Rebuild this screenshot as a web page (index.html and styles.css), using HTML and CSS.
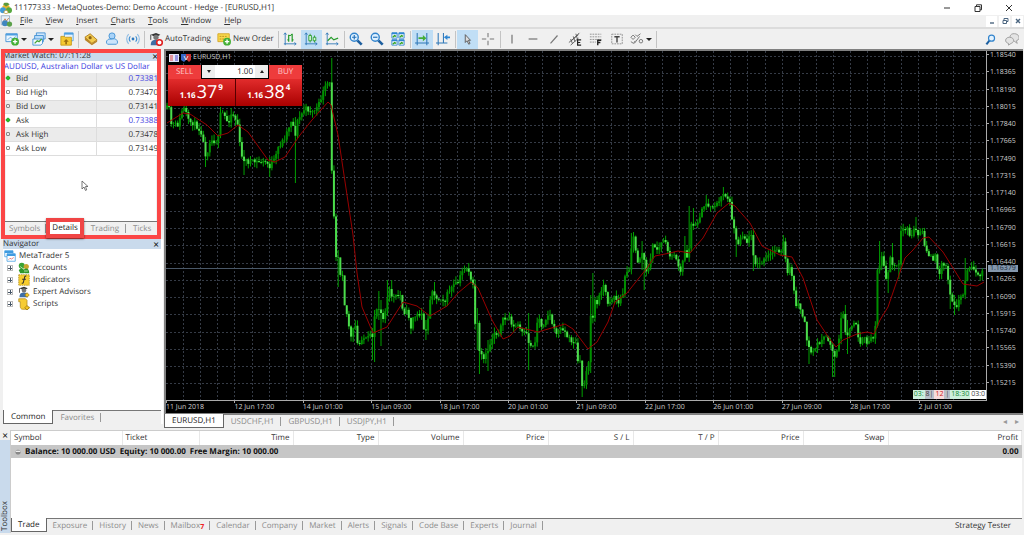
FILE: index.html
```
<!DOCTYPE html>
<html lang="en">
<head>
<meta charset="utf-8">
<title>11177333 - MetaQuotes-Demo: Demo Account - Hedge - [EURUSD,H1]</title>
<link rel="stylesheet" href="styles.css">
</head>
<body>
<svg class="defs" aria-hidden="true">
  <symbol id="trader" viewBox="0 0 16 16"><path d="M2 3l6-2 5 2-5 3z" fill="#333"/><circle cx="8" cy="6" r="3" fill="#777"/><path d="M2 15c0-6 3-6 6-6s5 1 5 6z" fill="#3d6ea5"/><path d="M2 3v6" stroke="#333"/></symbol>
</svg>

<header class="titlebar">
  <svg class="icon" viewBox="0 0 16 16"><path d="M3 6l5-5 5 5-2 5H5z" fill="#e8b62e"/><path d="M4 3l4 3 5-3-3-2H6z" fill="#5b9a3b"/><circle cx="4" cy="11" r="4" fill="#3f9bd8"/><circle cx="12" cy="11" r="4" fill="#57a83f"/><path d="M5 14c1-4 5-4 6 0l-3 2z" fill="#fff" stroke="#b58b20"/></svg>
  <h1>11177333 - MetaQuotes-Demo: Demo Account - Hedge - [EURUSD,H1]</h1>
  <div class="window-buttons">
    <button aria-label="Minimize"><svg viewBox="0 0 8 8"><path d="M1 4h6" stroke="#333"/></svg></button>
    <button aria-label="Restore"><svg viewBox="0 0 8 8"><path d="M1 2.5h5v5H1zM2.5 2.5V.8h5v5H6" fill="none" stroke="#333"/></svg></button>
    <button aria-label="Close"><svg viewBox="0 0 8 8"><path d="M1 1l6 6M7 1L1 7" stroke="#333"/></svg></button>
  </div>
</header>

<nav class="menubar">
  <svg class="icon" viewBox="0 0 16 16"><path d="M1 1h11v12H1z" fill="#e8f0f8" stroke="#8ba6bf"/><path d="M3 10l3-5 2 3 3-4" fill="none" stroke="#c06a2d"/><circle cx="6" cy="11" r="4" fill="#3f86c0"/><circle cx="12" cy="12" r="3.5" fill="#5ba04a"/></svg>
  <button><u>F</u>ile</button><button><u>V</u>iew</button><button><u>I</u>nsert</button><button><u>C</u>harts</button><button><u>T</u>ools</button><button><u>W</u>indow</button><button><u>H</u>elp</button>
  <div class="mdi-buttons">
    <button aria-label="Minimize chart"><svg viewBox="0 0 8 8"><path d="M2 6h4" stroke="#4c6680" stroke-width="1.4"/></svg></button>
    <button aria-label="Restore chart"><svg viewBox="0 0 8 8"><path d="M2 3.500h3.500v3H2zM3 3.500v-2h4v3H5.500" fill="none" stroke="#4c6680"/></svg></button>
    <button aria-label="Close chart"><svg viewBox="0 0 8 8"><path d="M2 2l4 4M6 2L2 6" stroke="#4c6680" stroke-width="1.4"/></svg></button>
  </div>
</nav>

<div class="toolbar">
  <button class="drop" aria-label="New chart"><svg class="icon" viewBox="0 0 16 16"><path d="M1 2h13v9H1z" fill="#eaf5ff" stroke="#3f8fd2"/><path d="M1 2h13v2H1z" fill="#4c9fe0"/><path d="M3 9l3-3 3 2 3-3" fill="none" stroke="#53a5dd"/><circle cx="11.500" cy="11" r="4.500" fill="#45b036"/><path d="M11.500 8.500v5M9 11h5" stroke="#fff" stroke-width="1.600"/></svg><i></i></button>
  <button class="drop" aria-label="Profiles"><svg class="icon" viewBox="0 0 16 16"><path d="M5 1h10v7H5z" fill="#cfe6fb" stroke="#3f8fd2"/><path d="M3 4h10v7H3z" fill="#b9dcfa" stroke="#3f8fd2"/><path d="M1 8h11v5l-2 2H1z" fill="#f3faff" stroke="#3f8fd2"/><path d="M3 13l3-3 2 1 3-3" fill="none" stroke="#45a536" stroke-width="1.500"/></svg><i></i></button>
  <button aria-label="Market Watch"><svg class="icon" viewBox="0 0 16 16"><path d="M5 1h10v9H5z" fill="#e6f3ff" stroke="#4c9fe0"/><path d="M5 1h10v2H5z" fill="#4c9fe0"/><path d="M1 5h4l1 1h7v9H1z" fill="#f5c932" stroke="#c79a18"/><path d="M7 8l3 3H8v3H6v-3H4z" fill="#9c700e"/></svg></button>
  <span class="sep"></span>
  <button aria-label="Data window"><svg class="icon" viewBox="0 0 16 16"><path d="M1 6l6-4 8 7-6 4z" fill="#f3ca4e" stroke="#a8791a"/><path d="M1 6v3l8 6v-2zM9 13l6-4v2l-6 4z" fill="#b9862a"/><circle cx="7" cy="6.500" r="1.800" fill="#8a6417"/></svg></button>
  <button aria-label="Accounts"><svg class="icon" viewBox="0 0 16 16"><circle cx="8" cy="4.500" r="3.500" fill="#a9d3f8" stroke="#3f8fd2"/><path d="M3 14a3 3 0 010-5c2-2 3 0 5-1 2 0 4-1 5 1a3 3 0 010 5z" fill="#cbe4fb" stroke="#3f8fd2"/></svg></button>
  <button aria-label="Signals"><svg class="icon" viewBox="0 0 16 16" fill="none"><circle cx="8" cy="8" r="1.600" fill="#2b78bf"/><path d="M5 5a4.500 4.500 0 000 6M11 5a4.500 4.500 0 010 6" stroke="#3f8fd2" stroke-width="1.300"/><path d="M3 2.500a8 8 0 000 11M13 2.500a8 8 0 010 11" stroke="#8fbce4" stroke-width="1.300"/></svg></button>
  <span class="sep"></span>
  <button class="text"><svg class="icon" viewBox="0 0 16 16"><use href="#trader"/><circle cx="12" cy="12" r="3.200" fill="#fff" stroke="#df2020" stroke-width="1.800"/></svg>AutoTrading</button>
  <button class="text"><svg class="icon" viewBox="0 0 16 16"><path d="M1 2h13v9H1z" fill="#f8d84d" stroke="#d3a624"/><path d="M3 5h9M3 8h6" stroke="#b98c18" stroke-dasharray="2 1"/><circle cx="11.500" cy="11" r="4.500" fill="#45b036"/><path d="M11.500 8.500v5M9 11h5" stroke="#fff" stroke-width="1.600"/></svg>New Order</button>
  <span class="sep"></span>
  <button aria-label="Bar chart"><svg class="icon" viewBox="0 0 16 16" fill="none"><path d="M2.500 1v14M1 13.500h14M1 3l1.500-2L4 3M13 12l2 1.500-2 1.500" stroke="#2f78b8"/><path d="M6.500 3v8M5 9h1.500M6.500 4H9M10.500 2v9M10.500 9H12M9 3h1.500" stroke="#279c2c" stroke-width="1.400"/></svg></button>
  <button class="on" aria-label="Candlesticks"><svg class="icon" viewBox="0 0 16 16" fill="none"><path d="M2.500 1v14M1 13.500h14M1 3l1.500-2L4 3M13 12l2 1.500-2 1.500" stroke="#2f78b8"/><path d="M7 2v10M12 4v8" stroke="#279c2c"/><path d="M5.500 4h3v6h-3zM10.500 6h3v4h-3z" fill="#d7f5d5" stroke="#279c2c"/></svg></button>
  <button aria-label="Line chart"><svg class="icon" viewBox="0 0 16 16" fill="none"><path d="M2.500 1v14M1 13.500h14M1 3l1.500-2L4 3M13 12l2 1.500-2 1.500" stroke="#2f78b8"/><path d="M3 10l4-4 3 3 5-2" stroke="#279c2c" stroke-width="1.400"/></svg></button>
  <span class="sep"></span>
  <button aria-label="Zoom in"><svg class="icon" viewBox="0 0 16 16" fill="none"><path d="M9.500 9.500l5 5" stroke="#1d5f9f" stroke-width="3"/><circle cx="6" cy="6" r="4.600" fill="#dff1ff" stroke="#3384cc" stroke-width="1.600"/><path d="M6 3.500v5M3.500 6h5" stroke="#2370b8" stroke-width="1.300"/></svg></button>
  <button aria-label="Zoom out"><svg class="icon" viewBox="0 0 16 16" fill="none"><path d="M9.500 9.500l5 5" stroke="#1d5f9f" stroke-width="3"/><circle cx="6" cy="6" r="4.600" fill="#dff1ff" stroke="#3384cc" stroke-width="1.600"/><path d="M3.500 6h5" stroke="#2370b8" stroke-width="1.300"/></svg></button>
  <button aria-label="Tile windows"><svg class="icon" viewBox="0 0 16 16"><path d="M1 1h6v6H1zM9 1h6v6H9zM1 9h6v6H1zM9 9h6v6H9z" fill="#fff" stroke="#2f86d2"/><path d="M1 1.500h6M9 1.500h6M1 9.500h6M9 9.500h6" stroke="#2f86d2" stroke-width="2"/><path d="M2 6l2-2 2 1M10 6l2-2 2 1M2 14l2-2 2 1M10 14l2-2 2 1" fill="none" stroke="#35a526" stroke-width="1.400"/></svg></button>
  <span class="sep"></span>
  <button class="on" aria-label="Auto scroll"><svg class="icon" viewBox="0 0 16 16" fill="none"><path d="M2.500 1v14M13.500 1v14M0 12.500h16" stroke="#2f78b8" stroke-width="1.200"/><path d="M4 6h5V3.500L13 7l-4 3.500V8H4z" fill="#43ad36"/></svg></button>
  <button aria-label="Chart shift"><svg class="icon" viewBox="0 0 16 16" fill="none"><path d="M2.500 1v14M8.500 1v11M0 12.500h13" stroke="#2f78b8" stroke-width="1.200"/><path d="M9 6l4-3v2h3v2h-3v2z" fill="#2f86d2"/></svg></button>
  <span class="sep"></span>
  <button class="on" aria-label="Cursor"><svg class="icon" viewBox="0 0 16 16"><path d="M6 3v9l2-2 2 4 1.500-1-2-3.500H12z" fill="#ddd" stroke="#555"/></svg></button>
  <button aria-label="Crosshair"><svg class="icon" viewBox="0 0 16 16"><path d="M8 1v5M8 10v5M1 8h5M10 8h5" stroke="#777" stroke-width="1.200"/></svg></button>
  <span class="sep"></span>
  <button aria-label="Vertical line"><svg class="icon" viewBox="0 0 16 16"><path d="M8 3v10" stroke="#777" stroke-width="1.400"/></svg></button>
  <button aria-label="Horizontal line"><svg class="icon" viewBox="0 0 16 16"><path d="M3 8h10" stroke="#777" stroke-width="1.400"/></svg></button>
  <button aria-label="Trendline"><svg class="icon" viewBox="0 0 16 16"><path d="M4 13l8-9" stroke="#777" stroke-width="1.400"/></svg></button>
  <button aria-label="Equidistant channel"><svg class="icon" viewBox="0 0 16 16"><path d="M1 12L12 3M3 15l9-8M3 8l2 5M6 5l2 6M9 2l2 7M13 1L4 10" stroke="#555" fill="none"/><path d="M15 9h-4v6h4M11 12h3" fill="none" stroke="#222" stroke-width="1.400"/></svg></button>
  <button aria-label="Fibonacci retracement"><svg class="icon" viewBox="0 0 16 16"><path d="M1 2.500h13M1 5.500h13M1 8.500h13M1 11.500h7" stroke="#888" stroke-dasharray="2 1"/><path d="M14 9.500h-4V15M10 12h3" fill="none" stroke="#222" stroke-width="1.600"/></svg></button>
  <button aria-label="Text label"><svg class="icon" viewBox="0 0 16 16"><path d="M2 2.500h12v11H2z" fill="none" stroke="#888" stroke-dasharray="2 1"/><path d="M5 5.500h6M8 5v7" stroke="#444" stroke-width="1.600"/></svg></button>
  <button class="drop" aria-label="Objects"><svg class="icon" viewBox="0 0 16 16" fill="none" stroke="#777" stroke-width="1.100"><path d="M1 6l2.500-2.500L6 6 3.500 8.500zM6 3l2 2 4-3M5 13l6-8M1 11l3 2 2-3"/><circle cx="12.500" cy="10.500" r="2"/></svg><i></i></button>
  <span class="sep"></span>
  <span class="grow"></span>
  <button class="small" aria-label="Search"><svg class="icon" viewBox="0 0 16 16" fill="none"><path d="M7 9l-5 6" stroke="#1d5f9f" stroke-width="3"/><circle cx="9.500" cy="6" r="4.400" fill="#e4f3ff" stroke="#3384cc" stroke-width="1.700"/></svg></button>
  <button aria-label="Chat"><svg class="icon" viewBox="0 0 16 16" fill="#e4e4e4" stroke="#999"><path d="M9 2c8-1 9 7 4 8l1 3-4-3c-5 0-6-7-1-8z"/><path d="M5 6c6 0 6 6 2 7l-3 2v-2C-1 12 0 6 5 6z"/></svg></button>
</div>

<main class="workspace">
  <aside class="sidebar">
    <section class="market-watch">
      <div class="panel-title"><h2>Market Watch: 07:11:28</h2><button aria-label="Close Market Watch">×</button></div>
      <table class="quotes">
        <thead><tr><th colspan="2">AUDUSD, Australian Dollar vs US Dollar</th></tr></thead>
        <tbody>
          <tr class="live"><th><i></i>Bid</th><td>0.73381</td></tr>
          <tr><th><i></i>Bid High</th><td>0.73470</td></tr>
          <tr><th><i></i>Bid Low</th><td>0.73141</td></tr>
          <tr class="live"><th><i></i>Ask</th><td>0.73388</td></tr>
          <tr><th><i></i>Ask High</th><td>0.73478</td></tr>
          <tr><th><i></i>Ask Low</th><td>0.73149</td></tr>
        </tbody>
      </table>
      <div class="tabs"><button>Symbols</button><button class="current marked">Details</button><button>Trading</button><button>Ticks</button></div>
      <svg class="pointer" viewBox="0 0 8 12"><path d="M1 1v8l2-2 1.500 3.500 1.200-.6L4.500 6.500H7z" fill="#fff" stroke="#555" stroke-width=".8"/></svg>
      <div class="highlight"></div>
    </section>
    <section class="navigator">
      <div class="panel-title"><h2>Navigator</h2><button aria-label="Close Navigator">×</button></div>
      <div class="root"><svg class="icon" viewBox="0 0 16 16"><path d="M1 1h11v8H1z" fill="#fff" stroke="#3f9be0"/><path d="M1 1h11v3H1z" fill="#3f9be0"/><path d="M4 5h11v10H4z" fill="#fff" stroke="#3f9be0"/><path d="M4 5h11v3H4z" fill="#3f9be0"/><path d="M6 13l2-2 2 1 3-2" fill="none" stroke="#d66"/></svg>MetaTrader 5</div>
      <ul>
        <li><b></b><svg class="icon" viewBox="0 0 16 16"><circle cx="5" cy="5" r="4" fill="#3aa335"/><circle cx="11" cy="6" r="3.500" fill="#c7a52e"/><path d="M1 11c4-5 7-3 9 2l-2 2H3zM8 10c4-3 7 0 7 5H9z" fill="#2f982b"/><path d="M3 6l5 4M8 12h5" stroke="#d9f3c8"/></svg>Accounts</li>
        <li><b></b><svg class="icon" viewBox="0 0 16 16"><path d="M1 1h14v14H1z" fill="#f8ce2f" stroke="#a98718" stroke-dasharray="2 1"/><path d="M11 3c-3-1-2 3-3 5s0 5-3 4M5.500 7h5" fill="none" stroke="#333" stroke-width="1.400"/></svg>Indicators</li>
        <li><b></b><svg class="icon" viewBox="0 0 16 16"><use href="#trader"/><path d="M12 9l3 3-3 3-3-3z" fill="#f4c521" stroke="#9b7510"/></svg>Expert Advisors</li>
        <li><b></b><svg class="icon" viewBox="0 0 16 16"><path d="M1 1h9l2 2v9h3c0 3-2 3-4 3H6c-2 0-3-2-3-4V5H1z" fill="#f6cc35" stroke="#b08a1c"/><path d="M12 10l3 3-3 3-3-3z" fill="#f4c521" stroke="#9b7510"/></svg>Scripts</li>
      </ul>
      <div class="tabs"><button class="current">Common</button><button>Favorites</button></div>
    </section>
  </aside>

  <section class="chart-area">
    <div class="chart">
      <div class="plot">
        <svg id="plot" viewBox="166 51 820 349" preserveAspectRatio="none"></svg>
        <div class="symbol">
          <svg viewBox="0 0 10 8"><path d="M0 0h10v8H0z" fill="#e5e5f8"/><path d="M1 2h3M1 4h3M1 6h3" stroke="#d44"/><path d="M6 2h3M6 4h3M6 6h3" stroke="#44c"/></svg>
          <svg viewBox="0 0 10 8"><path d="M0 0h5v6L3 8 0 6z" fill="#3668c8"/><path d="M5 0h5v6L8 8 5 5z" fill="#c33"/><path d="M3 2l2 4 2-4" fill="none" stroke="#ddd"/></svg>
          EURUSD,H1
        </div>
        <div class="deal">
          <div class="deal-row">
            <button class="side">SELL</button>
            <div class="volume"><button aria-label="Less"><i class="less"></i></button><input aria-label="Volume" value="1.00"><button aria-label="More"><i class="more"></i></button></div>
            <button class="side">BUY</button>
          </div>
          <div class="deal-row">
            <button class="price">1.16<b>37</b><sup>9</sup></button>
            <button class="price">1.16<b>38</b><sup>4</sup></button>
          </div>
        </div>
        <div class="events"><span class="g">03:</span><span class="d">8|</span><span class="r">12</span><span class="d">|</span><span class="g">18:30</span><span>03:0</span></div>
      </div>
      <div class="prices" id="prices"><output class="last">1.16379</output></div>
      <div class="times" id="times"></div>
    </div>
    <div class="tabs chart-tabs"><button class="current">EURUSD,H1</button><button>USDCHF,H1</button><button>GBPUSD,H1</button><button>USDJPY,H1</button>
      <span class="grow"></span><button class="arrow" aria-label="Previous">◂</button><button class="arrow" aria-label="Next">▸</button></div>
  </section>
</main>

<section class="toolbox">
  <div class="rail"><button aria-label="Close Toolbox">×</button><h2>Toolbox</h2></div>
  <div class="terminal">
    <table class="orders">
      <colgroup><col class="w-symbol"><col class="w-ticket"><col class="w-time"><col class="w-num"><col class="w-num"><col class="w-num"><col class="w-num"><col class="w-num"><col class="w-num"><col class="w-num"><col></colgroup>
      <thead><tr><th>Symbol</th><th>Ticket</th><th>Time</th><th>Type</th><th>Volume</th><th>Price</th><th>S / L</th><th>T / P</th><th>Price</th><th>Swap</th><th>Profit</th></tr></thead>
      <tbody><tr><td colspan="10"><svg viewBox="0 0 8 8"><circle cx="4" cy="4" r="2.500" fill="#aaa"/><path d="M1.500 4a2.500 2.500 0 005 0" fill="#888"/><path d="M2 3.500h4" stroke="#eee"/></svg><span>Balance: 10 000.00 USD</span><span>Equity: 10 000.00</span><span>Free Margin: 10 000.00</span></td><td>0.00</td></tr></tbody>
    </table>
    <div class="tabs"><button class="current">Trade</button><button>Exposure</button><button>History</button><button>News</button><button>Mailbox<sub>7</sub></button><button>Calendar</button><button>Company</button><button>Market</button><button>Alerts</button><button>Signals</button><button>Code Base</button><button>Experts</button><button>Journal</button><span class="grow"></span><button class="tester">Strategy Tester</button></div>
  </div>
</section>
<script src="chart.js"></script>
</body>
</html>
```
FILE: styles.css
```
* { box-sizing: border-box; }
body {
  margin: 0;
  height: 100vh;
  display: flex;
  flex-direction: column;
  overflow: hidden;
  background: #f0f0f0;
  color: #333;
  font: 8px/12px "Open Sans", "Noto Sans", sans-serif;
  text-rendering: geometricPrecision;
}
button, input { font: inherit; color: inherit; border: 0; padding: 0; margin: 0; background: none; text-rendering: inherit; }
h1, h2 { margin: 0; font: inherit; }
.defs { position: absolute; width: 0; height: 0; }
.icon { width: 14px; height: 14px; flex: none; }
.grow { flex: 1; }

.titlebar { display: flex; align-items: center; height: 15px; background: #fff; flex: none; }
.titlebar .icon { width: 12px; height: 12px; margin-right: 2px; }
.window-buttons { margin-left: auto; display: flex; gap: 22px; padding-right: 10px; }
.window-buttons button { display: flex; width: 9px; }
.window-buttons svg { width: 8px; height: 8px; }

.menubar { display: flex; align-items: center; height: 14px; flex: none; border-bottom: 2px solid #dcdcdc; }
.menubar .icon { width: 13px; height: 12px; margin-right: 7px; }
.menubar > button { margin-right: 13px; }
.mdi-buttons { margin-left: auto; display: flex; gap: 2px; padding-right: 1px; }
.mdi-buttons button { display: flex; align-items: center; justify-content: center; width: 11px; height: 11px; background: #fff; }
.mdi-buttons svg { width: 8px; height: 8px; }

.toolbar { display: flex; align-items: center; height: 20px; flex: none; padding: 0 2px; }
.toolbar button { display: flex; align-items: center; justify-content: center; width: 21px; height: 19px; }
.toolbar button.drop { width: 27px; gap: 2px; }
.toolbar button.drop i { border: 3px solid transparent; border-top-color: #222; border-bottom: 0; }
.toolbar button.text { width: auto; gap: 2px; padding: 0 3px; white-space: nowrap; }
.toolbar button.on { background: #c0def5; }
.toolbar .small .icon { width: 11px; height: 11px; }
.sep { width: 1px; height: 17px; background: #c4c4c4; margin: 0 1px; }

.workspace { flex: 1; min-height: 0; display: flex; gap: 1px; }
.sidebar { width: 163px; flex: none; display: flex; flex-direction: column; padding-left: 3px; }
.panel-title { display: flex; align-items: center; justify-content: space-between; height: 10px; flex: none; background: #c9daec; line-height: 10px; }
.panel-title button { width: 10px; color: #000; font-size: 10px; line-height: 8px; }

.tabs { display: flex; height: 14px; flex: none; border-top: 1px solid #777; background: #f0f0f0; color: #8c8c8c; }
.tabs button { display: flex; align-items: center; padding: 0 6px; height: 13px; position: relative; white-space: nowrap; }
.tabs button:not(.current)::after { content: ""; position: absolute; right: 0; top: 2px; height: 9px; border-right: 1px solid #999; }
.tabs .current { background: #fff; color: #222; border: 1px solid #666; border-top: 0; margin-top: -1px; height: 14px; }

.market-watch { position: relative; display: flex; flex-direction: column; height: 190px; padding: 2px 3px 4px 0; }
.quotes { width: 155px; height: 95px; border-collapse: collapse; background: #fff; }
.quotes th, .quotes td { padding: 0; font-weight: 400; text-align: left; border-bottom: 1px solid #ddd; line-height: 12px; }
.quotes thead th { color: #3c3ce0; padding-left: 1px; border: 0; }
.quotes tbody th { width: 93px; border-right: 1px solid #ddd; }
.quotes td { text-align: right; }
.quotes .live td { color: #3c3ce0; }
.quotes tbody tr:nth-child(odd) { background: #ebebeb; }
.quotes i { display: inline-block; width: 4px; height: 4px; margin: 0 6px 0 3px; border: 1px solid #888; border-radius: 1px; vertical-align: 1px; }
.quotes .live i { background: #27c427; border-color: #27a427; transform: rotate(45deg); }
.market-watch .tabs { margin-top: auto; }
.market-watch .tabs button:not(.current):not(:first-child) { padding: 0 7px; }
.market-watch::before { content: ""; position: absolute; inset: 12px 7px 18px 3px; z-index: -1; background: #fff; }
.market-watch .marked { padding: 0 5px; }
.marked::before { content: ""; position: absolute; inset: -3px -1px -4px; border: 4px solid #f04545; box-shadow: 0 1px 2px #0008; z-index: 3; }
.pointer { position: absolute; left: 78px; top: 131px; width: 8px; height: 12px; }
.highlight { position: absolute; inset: 0 2px 0 -2px; border: 4px solid #fb4646; }

.navigator { flex: 1; display: flex; flex-direction: column; margin-bottom: 6px; padding-right: 2px; background: #fff; }
.navigator .panel-title { margin-bottom: 1px; }
.navigator .icon { width: 12px; height: 12px; }
.root { display: flex; align-items: center; gap: 3px; height: 12px; margin-left: 1px; }
.navigator ul { list-style: none; margin: 0; padding: 0 0 0 4px; flex: 1; }
.navigator li { display: flex; align-items: center; gap: 3px; height: 12px; }
.navigator li b { width: 6px; height: 6px; margin-right: 2px; border: 1px solid #bbb; background: linear-gradient(#456, #456) center / 4px 1px no-repeat, linear-gradient(#456, #456) center / 1px 4px no-repeat, #fff; }
.navigator .tabs button { padding: 0 7px; }

.chart-area { flex: 1; min-width: 0; display: flex; flex-direction: column; padding: 0 1px 1px 0; }
.chart { flex: 1; min-height: 0; display: grid; grid-template: minmax(0, 1fr) 12px / minmax(0, 1fr) 36px; background: #000; border: 2px solid #808080; border-width: 2px 0 2px 2px; color: #ccc; font-size: 7px; }
.plot { position: relative; border-right: 1px solid #aaa; border-bottom: 1px solid #aaa; }
.plot > svg { display: block; width: 100%; height: 100%; position: absolute; inset: 0; }
.grid { stroke: #353b46; stroke-dasharray: 2 2; }
.bid { stroke: #4a5868; }
.wick { stroke: #00a000; }
.up { stroke: #008f00; stroke-width: 2; }
.down { stroke: #4cdc4c; stroke-width: 2; }
.average { fill: none; stroke: #900; }
.symbol { position: absolute; left: 3px; top: 1px; display: flex; gap: 2px; align-items: center; }
.symbol svg { width: 10px; height: 8px; }
.deal { position: absolute; left: 2px; top: 14px; width: 134px; color: #fff; }
.deal-row { display: flex; }
.side { flex: none; width: 33px; height: 14px; background: #ee3c3c; color: #fcc; font-size: 8px; }
.volume { flex: 1; min-width: 0; display: flex; height: 13px; margin: 0 1px; background: #fff; color: #222; font-size: 8px; }
.volume button { flex: none; display: flex; align-items: center; justify-content: center; width: 13px; background: #eee; }
.volume i { border: 2px solid transparent; }
.volume .less { border-top: 3px solid #222; border-bottom: 0; }
.volume .more { border-bottom: 3px solid #222; border-top: 0; }
.volume input { flex: 1; width: 0; min-width: 0; text-align: right; padding-right: 2px; }
.deal .price { flex: 1; display: flex; align-items: baseline; justify-content: center; gap: 1px; height: 27px; background: linear-gradient(#e22c2c, #a90000); font-weight: 700; font-size: 8px; line-height: 26px; }
.deal .price + .price { border-left: 1px solid #500; }
.price b { font-weight: 400; font-size: 18px; }
.price sup { font-size: 8px; line-height: 8px; align-self: flex-start; padding-top: 5px; }
.events { position: absolute; right: 0; bottom: 1px; display: flex; height: 9px; line-height: 9px; background: #fff; color: #444; }
.events span { padding: 0 1px; }
.events .g { color: #168a36; background: #cdeedd; }
.events .d { background: #b8bec8; }
.events .r { color: #c22; background: #f6dada; }
.prices { position: relative; display: flex; flex-direction: column; justify-content: space-between; padding: 0 0 12px; line-height: 10px; }
.prices span::before { content: ""; display: inline-block; width: 2px; height: 1px; margin-right: 1px; background: #aaa; vertical-align: 2px; }
.last { position: absolute; left: 1px; top: 61%; padding: 0 2px; height: 7px; line-height: 7px; background: #8497ad; color: #203040; }
.times { display: grid; grid-template-columns: repeat(12, 1fr); grid-column: 1; line-height: 13px; white-space: nowrap; }
.times span::before { content: ""; display: block; width: 1px; height: 2px; margin-bottom: -2px; background: #aaa; }
.chart-tabs { border-top: 0; }
.chart-tabs button { padding: 0 7px; }
.chart-tabs .arrow { color: #999; padding: 0 4px; }
.chart-tabs .arrow::after { display: none; }

.toolbox { display: flex; height: 105px; flex: none; padding: 0 2px 2px 0; }
.rail { width: 10px; flex: none; display: flex; flex-direction: column; }
.rail button { height: 10px; font-size: 10px; line-height: 9px; color: #000; }
.rail h2 { flex: 1; writing-mode: vertical-rl; transform: rotate(180deg); background: #c9daec; line-height: 10px; padding-top: 2px; }
.terminal { flex: 1; min-width: 0; display: flex; flex-direction: column; background: #fff; border: 1px solid #ccc; border-width: 1px 0 0 1px; }
.orders { width: 100%; table-layout: fixed; border-collapse: collapse; }
.orders th, .orders td { padding: 0 3px; text-align: right; font-weight: 400; height: 14px; line-height: 12px; }
.orders th { border-right: 1px solid #e8e8e8; }
.orders th:nth-child(-n+2), .orders td:first-child { text-align: left; }
.orders td { background: #c6c6c6; color: #111; font-weight: 700; height: 13px; }
.orders svg { width: 8px; height: 8px; margin-right: 3px; vertical-align: -2px; }
.orders td span { margin-right: 4px; }
.w-symbol { width: 111px; }
.w-ticket { width: 77px; }
.w-time { width: 94px; }
.w-num { width: 85px; }
.toolbox .tabs { margin-top: auto; height: 15px; }
.toolbox .tabs sub { color: #e22; font-size: 7px; line-height: 7px; font-weight: 700; padding-top: 4px; }
.toolbox .tabs .tester { color: #333; padding-right: 11px; }
.tabs .tester::after { display: none; }
```
FILE: chart.js
```
const closes = [
  [167,108],[170,110],[171,124],[179,125],[181,112],[185,108],[188,121],[195,124],[202,133],[205,155],[208,150],[210,140],[218,142],[220,115],[223,113],[228,123],[232,112],[238,125],[241,157],[248,162],[267,162],[269,168],[272,162],[275,160],[278,148],[285,137],[292,118],[295,137],[297,122],[305,108],[312,112],[318,107],[323,93],[327,84],[330,84],[331.500,169],[333,170],[334,218],[335,220],[336,255],[339,257],[340,273],[343,273],[344,301],[347,315],[351,338],[355,323],[357,343],[359,346],[362,337],[367,340],[370,335],[372,342],[374,317],[378,305],[383,317],[387,307],[388,288],[393,298],[401,295],[403,312],[408,312],[411,328],[413,318],[422,312],[423,331],[427,333],[428,317],[432,288],[437,300],[442,297],[445,302],[448,292],[453,286],[458,283],[462,272],[468,267],[471,282],[473,285],[475,323],[478,326],[479,352],[484,360],[490,345],[494,332],[498,335],[503,320],[510,317],[513,328],[518,325],[522,333],[527,335],[530,347],[535,343],[538,315],[542,327],[547,315],[550,315],[555,333],[563,328],[568,338],[577,345],[578,363],[579,340],[581,385],[585,385],[587,363],[589,360],[590,318],[593,317],[595,300],[597,305],[603,283],[608,303],[615,295],[618,305],[623,293],[626,270],[630,268],[632,238],[634,238],[637,263],[643,252],[647,277],[650,260],[653,245],[658,250],[664,238],[667,250],[672,258],[675,252],[680,276],[683,260],[684,248],[687,256],[689,253],[690,220],[695,228],[700,215],[706,203],[710,207],[719,203],[723,192],[727,198],[729,197],[731,213],[735,230],[737,247],[742,233],[747,242],[752,232],[754,263],[758,265],[762,262],[770,255],[777,248],[782,253],[783,241],[785,253],[787,278],[789,267],[793,277],[795,308],[798,300],[802,317],[805,325],[807,340],[810,352],[813,352],[818,343],[827,337],[833,350],[834,364],[836,348],[838,350],[841,320],[843,313],[846,340],[850,328],[857,322],[859,350],[863,338],[867,342],[875,337],[877,267],[879,270],[881,253],[887,283],[890,257],[893,267],[899,265],[901,233],[908,228],[911,240],[915,223],[917,238],[922,228],[924,247],[933,260],[936,255],[938,277],[942,263],[947,267],[949,288],[952,300],[957,306],[960,297],[964,295],[966,268],[970,270],[973,265],[977,277],[982,273],[984,268]
];
const spikes = [
  [205,140,167],[220,107,130],[232,108,125],[243,150,175],[269,157,177],[295,117,183],[331,58,110],[338,250,287],[372,330,360],[374,310,362],[380,300,346],[378,291,320],[387,280,310],[391,280,300],[425,320,340],[434,282,300],[468,263,275],[478,308,350],[480,340,374],[487,340,371],[529,313,370],[583,370,397],[590,295,373],[593,273,320],[631,233,265],[634,232,250],[643,241,270],[645,260,290],[684,236,262],[690,206,240],[694,208,230],[706,195,210],[724,187,200],[737,235,257],[753,240,271],[784,235,250],[810,345,364],[833,345,377],[835,350,377],[845,305,335],[848,320,354],[880,241,265],[888,270,293],[892,243,270],[899,260,279],[915,217,230],[950,285,309],[955,295,315],[965,258,280]
];
const average = [
  [167,123],[183,113],[190,114],[207,125],[218,136],[228,133],[238,125],[248,132],[268,160],[275,162],[285,157],[300,135],[312,120],[328,102],[331,105],[338,135],[353,235],[357,273],[362,307],[373,333],[387,327],[403,302],[417,306],[430,316],[447,306],[458,293],[471,282],[478,288],[492,320],[503,339],[510,336],[518,327],[538,332],[565,324],[573,329],[588,349],[597,342],[608,322],[615,302],[627,293],[647,268],[655,256],[670,253],[678,251],[690,253],[703,238],[717,213],[729,203],[735,206],[750,223],[762,246],[780,255],[792,257],[803,278],[817,320],[829,338],[836,347],[843,340],[857,334],[867,332],[874,334],[880,320],[888,307],[900,272],[905,258],[913,250],[923,238],[929,237],[943,252],[953,268],[963,284],[977,286],[984,282]
];

const plot = document.getElementById("plot");
function line(cls, x1, y1, x2, y2) {
  const el = document.createElementNS("http://www.w3.org/2000/svg", "line");
  Object.entries({ class: cls, x1, y1, x2, y2 }).forEach(([k, v]) => el.setAttribute(k, v));
  plot.append(el);
}

for (let i = 1; i < 48; i++) {
  const x = Math.round(166 + i * 17.1) + 0.5;
  line("grid", x, 51, x, 400);
}
for (let i = 0; i < 20; i++) {
  const y = Math.round(56 + i * 17.22) + 0.5;
  line("grid", 166, y, 986, y);
}
line("bid", 166, 268.5, 986, 268.5);

let seed = 11;
function random() {
  seed = (seed * 16807) % 2147483647;
  return seed / 2147483647;
}
function closeAt(x) {
  const i = Math.max(1, closes.findIndex(p => p[0] >= x));
  const [a, b] = [closes[i - 1], closes[i]];
  return a[1] + (b[1] - a[1]) * (x - a[0]) / (b[0] - a[0]);
}

const step = 2.14;
let open = 108;
for (let x = 167; x < 984; x += step) {
  const close = closeAt(x) + (random() - 0.5) * 5;
  let high = Math.min(open, close) - random() * 6;
  let low = Math.max(open, close) + random() * 6;
  for (const [sx, top, bottom] of spikes) {
    if (Math.abs(sx - x) <= step / 2) {
      high = Math.min(high, top);
      low = Math.max(low, bottom);
    }
  }
  line("wick", x, high, x, low);
  line(close > open ? "down" : "up", x, open, x, close);
  open = close;
}

const curve = document.createElementNS("http://www.w3.org/2000/svg", "polyline");
curve.setAttribute("class", "average");
curve.setAttribute("points", average.join(" "));
plot.append(curve);

function labels(id, texts) {
  const box = document.getElementById(id);
  for (const text of texts) {
    const span = document.createElement("span");
    span.textContent = text;
    box.append(span);
  }
}
labels("prices", Array.from({ length: 20 }, (_, i) => ((118540 - i * 175) / 100000).toFixed(5)));
labels("times", ["11 Jun 2018", "12 Jun 17:00", "14 Jun 01:00", "15 Jun 09:00", "18 Jun 17:00", "20 Jun 01:00", "21 Jun 09:00", "22 Jun 17:00", "26 Jun 01:00", "27 Jun 09:00", "28 Jun 17:00", "2 Jul 01:00"]);
```
